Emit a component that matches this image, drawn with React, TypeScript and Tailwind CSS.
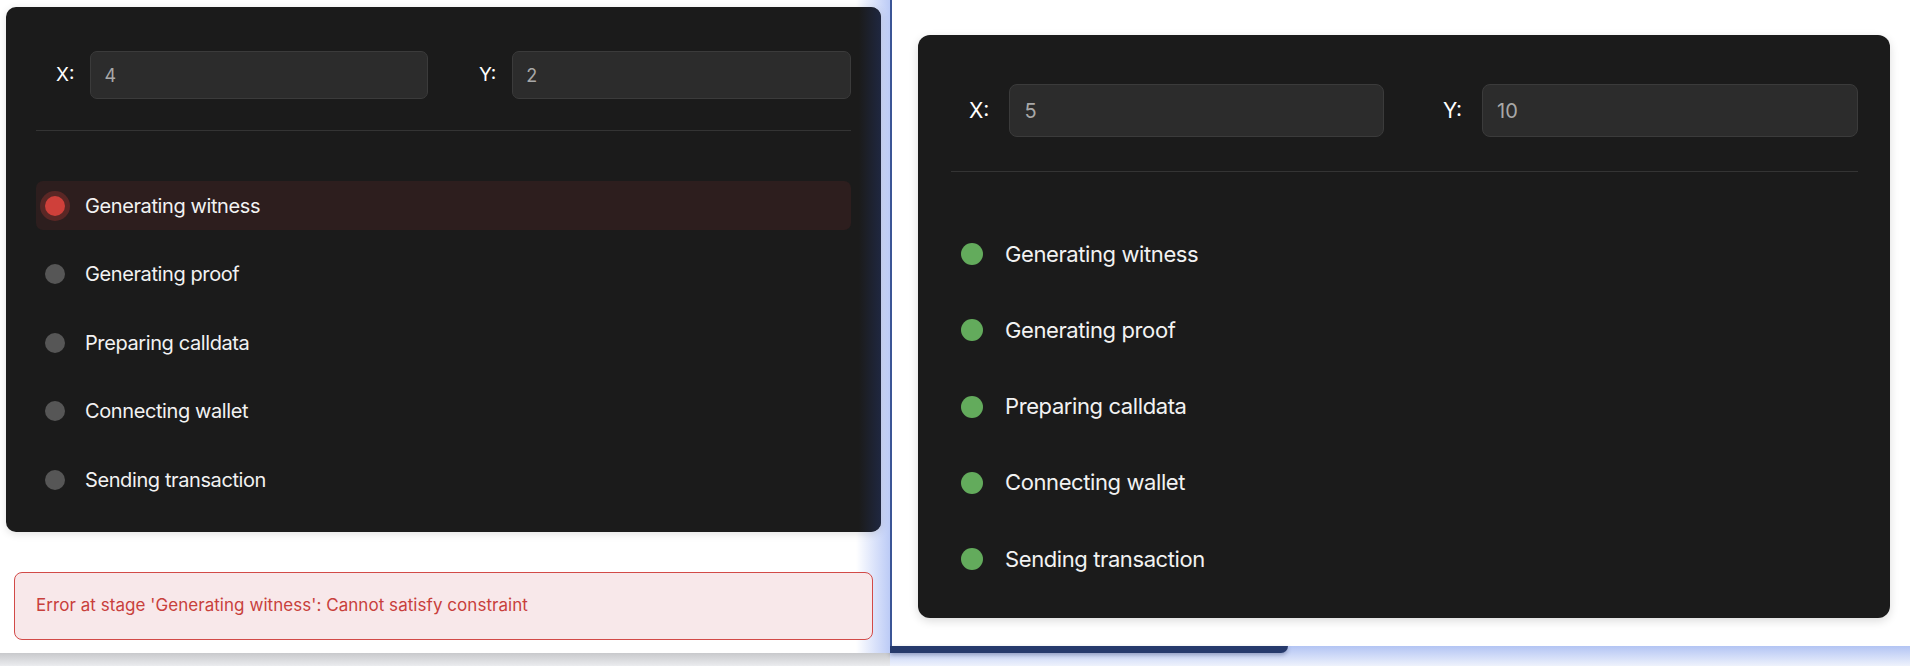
import React from 'react';

const STAGES = [
  'Generating witness',
  'Generating proof',
  'Preparing calldata',
  'Connecting wallet',
  'Sending transaction',
];

type FieldProps = { label: string; value: string; big?: boolean };

const Field: React.FC<FieldProps> = ({ label, value, big }) => (
  <div className={big ? 'flex items-center gap-[20px]' : 'flex items-center gap-[16px]'}>
    <span className={big ? 'text-[21px] text-white' : 'text-[19px] text-white'}>{label}</span>
    <div
      className={
        big
          ? 'flex h-[53px] flex-1 items-center rounded-[8px] border border-[#3b3b3b] bg-[#2c2c2c] px-[14px] text-[20px] text-[#a8a8a8]'
          : 'flex h-[48px] flex-1 items-center rounded-[7px] border border-[#3b3b3b] bg-[#2c2c2c] px-[13px] text-[18px] text-[#a8a8a8]'
      }
    >
      {value}
    </div>
  </div>
);

// panneau de gauche : echec a la premiere etape
function FailedRun() {
  return (
    <div className="flex w-[890px] shrink-0 flex-col">
      <div className="relative h-[653px] bg-white">
        {/* reflet bleu du bord droit */}
        <div className="pointer-events-none absolute inset-y-0 right-0 w-[34px] bg-gradient-to-r from-white/0 to-[#bccbf6]" />

        <div className="relative z-10 ml-[6px] mt-[7px] flex h-[525px] w-[875px] flex-col overflow-hidden rounded-[10px] bg-[#1b1b1b] px-[30px] pt-[44px] shadow-[0_2px_8px_rgba(0,0,0,0.12)]">
          <div className="grid grid-cols-2 gap-x-[51px] pl-[20px]">
            <Field label="X:" value="4" />
            <Field label="Y:" value="2" />
          </div>
          <div className="mt-[31px] h-px bg-[#343434]" />
          <div className="mt-[50px] flex flex-col gap-[19.5px]">
            {STAGES.map((s, i) => (
              <div
                key={s}
                className={
                  i === 0
                    ? 'flex h-[49px] items-center gap-[20px] rounded-[7px] bg-[#2d1e1e] pl-[9px]'
                    : 'flex h-[49px] items-center gap-[20px] pl-[9px]'
                }
              >
                {i === 0 ? (
                  <span className="h-[20px] w-[20px] shrink-0 rounded-full bg-[#cf403a] shadow-[0_0_0_5px_rgba(207,64,58,0.28)]" />
                ) : (
                  <span className="h-[20px] w-[20px] shrink-0 rounded-full bg-[#565656]" />
                )}
                <span className="text-[20px] tracking-[-0.4px] text-[#f2f2f2]">{s}</span>
              </div>
            ))}
          </div>
          <div className="pointer-events-none absolute inset-y-0 right-0 w-[22px] bg-gradient-to-r from-[#1b1b1b]/0 to-[#1f2740]" />
        </div>

        <div className="relative z-10 ml-[14px] mt-[40px] flex h-[68px] w-[859px] items-center rounded-[8px] border border-[#d24a48] bg-[#f8e8ea] px-[21px] text-[17px] tracking-[0.05px] text-[#c8403c]">
          Error at stage 'Generating witness': Cannot satisfy constraint
        </div>
      </div>
      <div className="flex-1 bg-gradient-to-b from-[#c8c9cc] to-[#ebecef]" />
    </div>
  );
}

// panneau de droite : toutes les etapes ok
function SuccessRun() {
  return (
    <div className="flex flex-1 flex-col">
      <div className="h-[646px] border-l-2 border-[#3b5596] bg-white pl-[26px] pt-[35px]">
        <div className="flex h-[583px] w-[972px] flex-col rounded-[12px] bg-[#1b1b1b] pl-[33px] pr-[32px] pt-[49px] shadow-[0_3px_10px_rgba(0,0,0,0.14)]">
          <div className="grid grid-cols-2 gap-x-[59px] pl-[18px]">
            <Field label="X:" value="5" big />
            <Field label="Y:" value="10" big />
          </div>
          <div className="mt-[34px] h-px bg-[#343434]" />
          <div className="mt-[55px] flex flex-col gap-[22.25px]">
            {STAGES.map((s) => (
              <div key={s} className="flex h-[54px] items-center gap-[22px] pl-[10px]">
                <span className="h-[22px] w-[22px] shrink-0 rounded-full bg-[#63ab5c]" />
                <span className="text-[22px] tracking-[-0.4px] text-[#f2f2f2]">{s}</span>
              </div>
            ))}
          </div>
        </div>
      </div>
      <div className="flex-1 bg-gradient-to-b from-[#b3c4f3] to-[#eef2fc]">
        <div className="h-[7px] w-[398px] rounded-br-[8px] bg-[#263a6c] shadow-[0_2px_4px_rgba(20,30,70,0.3)]" />
      </div>
    </div>
  );
}

export default function App() {
  return (
    <div className="flex h-[666px] w-[1910px] overflow-hidden bg-[#e6ebf8] font-['Inter','Noto_Sans',sans-serif]">
      <FailedRun />
      <SuccessRun />
    </div>
  );
}
